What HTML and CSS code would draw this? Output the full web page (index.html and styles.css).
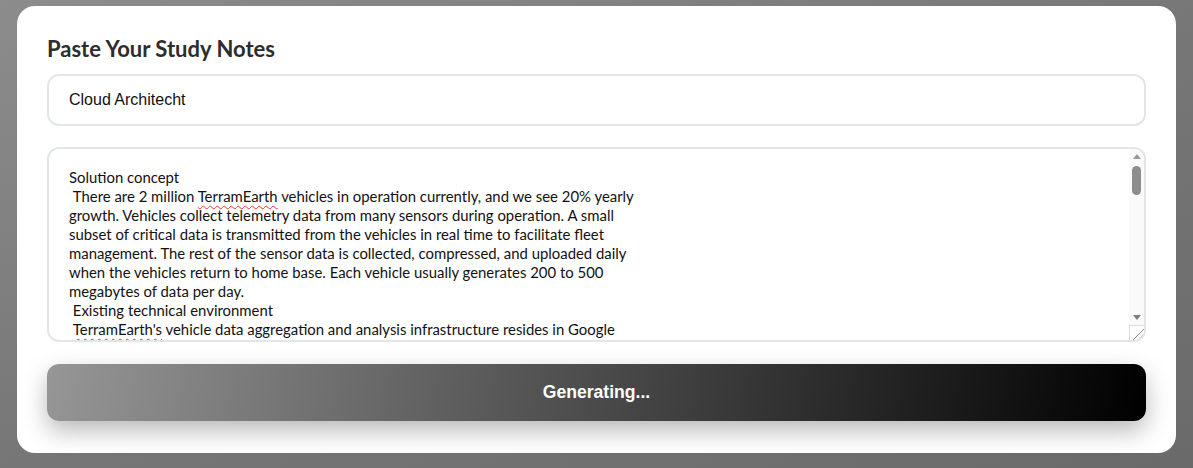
FILE: index.html
```html
<!DOCTYPE html>
<html lang="en">
<head>
<meta charset="utf-8">
<title>Study Notes</title>
<link rel="stylesheet" href="styles.css">
</head>
<body>
<main class="card">
  <h2 class="title">Paste Your Study Notes</h2>
  <div class="field">Cloud Architecht</div>
  <div class="notes-box">
    <div class="notes">Solution concept
 There are 2 million <span class="typo">TerramEarth</span> vehicles in operation currently, and we see 20% yearly
growth. Vehicles collect telemetry data from many sensors during operation. A small
subset of critical data is transmitted from the vehicles in real time to facilitate fleet
management. The rest of the sensor data is collected, compressed, and uploaded daily
when the vehicles return to home base. Each vehicle usually generates 200 to 500
megabytes of data per day.
 Existing technical environment
 <span class="typo">TerramEarth's</span> vehicle data aggregation and analysis infrastructure resides in Google
Cloud and serves clients from all around the world. A growing amount of sensor data is
captured from their two main manufacturing plants and sent to private data centers that
contain their legacy inventory and logistics management systems.</div>
    <div class="scrollbar" aria-hidden="true">
      <div class="sb-btn"><span class="arrow-up"></span></div>
      <div class="sb-thumb"></div>
      <div class="sb-space"></div>
      <div class="sb-btn"><span class="arrow-down"></span></div>
      <div class="sb-corner"></div>
    </div>
  </div>
  <button class="generate" type="button">Generating...</button>
</main>
</body>
</html>
```

FILE: styles.css
```css
html, body {
  margin: 0;
  height: 100%;
}
body {
  background: linear-gradient(160deg, #8c8c8c 0%, #777 50%, #6a6a6a 100%);
  padding: 6px 17px 15px;
  box-sizing: border-box;
  font-family: "Lato", "Open Sans", sans-serif;
}
.card {
  background: #fff;
  border-radius: 18px;
  padding: 30px 30px 32px;
  height: 447px;
  box-sizing: border-box;
  display: flex;
  flex-direction: column;
}
.title {
  margin: 0 0 12px;
  font-size: 22px;
  font-weight: 700;
  color: #2d2d2d;
  line-height: 26px;
}
.field {
  border: 2px solid #e2e5ea;
  border-radius: 12px;
  height: 52px;
  box-sizing: border-box;
  padding: 0 20px;
  display: flex;
  align-items: center;
  font-family: "Liberation Sans", Arial, sans-serif;
  font-size: 16px;
  color: #111;
  flex-shrink: 0;
}
.notes-box {
  position: relative;
  margin-top: 21px;
  height: 195px;
  box-sizing: border-box;
  border: 2px solid #e2e5ea;
  border-radius: 12px;
  overflow: hidden;
  flex-shrink: 0;
}
.notes {
  height: 100%;
  box-sizing: border-box;
  padding: 19px 20px 0;
  overflow: hidden;
  white-space: pre-wrap;
  font-size: 14.9px;
  line-height: 19px;
  color: #111;
}
.typo {
  text-decoration: underline wavy #e33;
  text-decoration-thickness: 1px;
  text-underline-offset: 3px;
}
.scrollbar {
  position: absolute;
  top: 0;
  right: 0;
  bottom: 0;
  width: 15px;
  background: #fafafa;
  display: flex;
  flex-direction: column;
  align-items: center;
}
.sb-btn {
  width: 15px;
  height: 15px;
  display: flex;
  align-items: center;
  justify-content: center;
  flex-shrink: 0;
}
.arrow-up {
  width: 0;
  height: 0;
  border-left: 4px solid transparent;
  border-right: 4px solid transparent;
  border-bottom: 5px solid #999;
}
.arrow-down {
  width: 0;
  height: 0;
  border-left: 4px solid transparent;
  border-right: 4px solid transparent;
  border-top: 5px solid #7d7d7d;
}
.sb-thumb {
  margin-top: 2px;
  width: 9px;
  height: 29px;
  border-radius: 5px;
  background: #8c8c8c;
  flex-shrink: 0;
}
.sb-space {
  flex: 1;
}
.sb-corner {
  width: 15px;
  height: 15px;
  box-sizing: border-box;
  border-top: 1px solid #dcdcdc;
  border-left: 1px solid #dcdcdc;
  background: linear-gradient(135deg, #fff 0%, #fff 58%, #8a8a8a 58%, #8a8a8a 64%, #fff 64%, #fff 76%, #8a8a8a 76%, #8a8a8a 82%, #fff 82%);
  flex-shrink: 0;
}
.generate {
  margin-top: 22px;
  height: 57px;
  flex-shrink: 0;
  border: 0;
  border-radius: 12px;
  background: linear-gradient(100deg, #969696 0%, #000 100%);
  color: #fff;
  font-family: "Liberation Sans", Arial, sans-serif;
  font-weight: 700;
  font-size: 17.6px;
  box-shadow: 0 10px 24px rgba(0, 0, 0, 0.28);
  cursor: pointer;
}
```
